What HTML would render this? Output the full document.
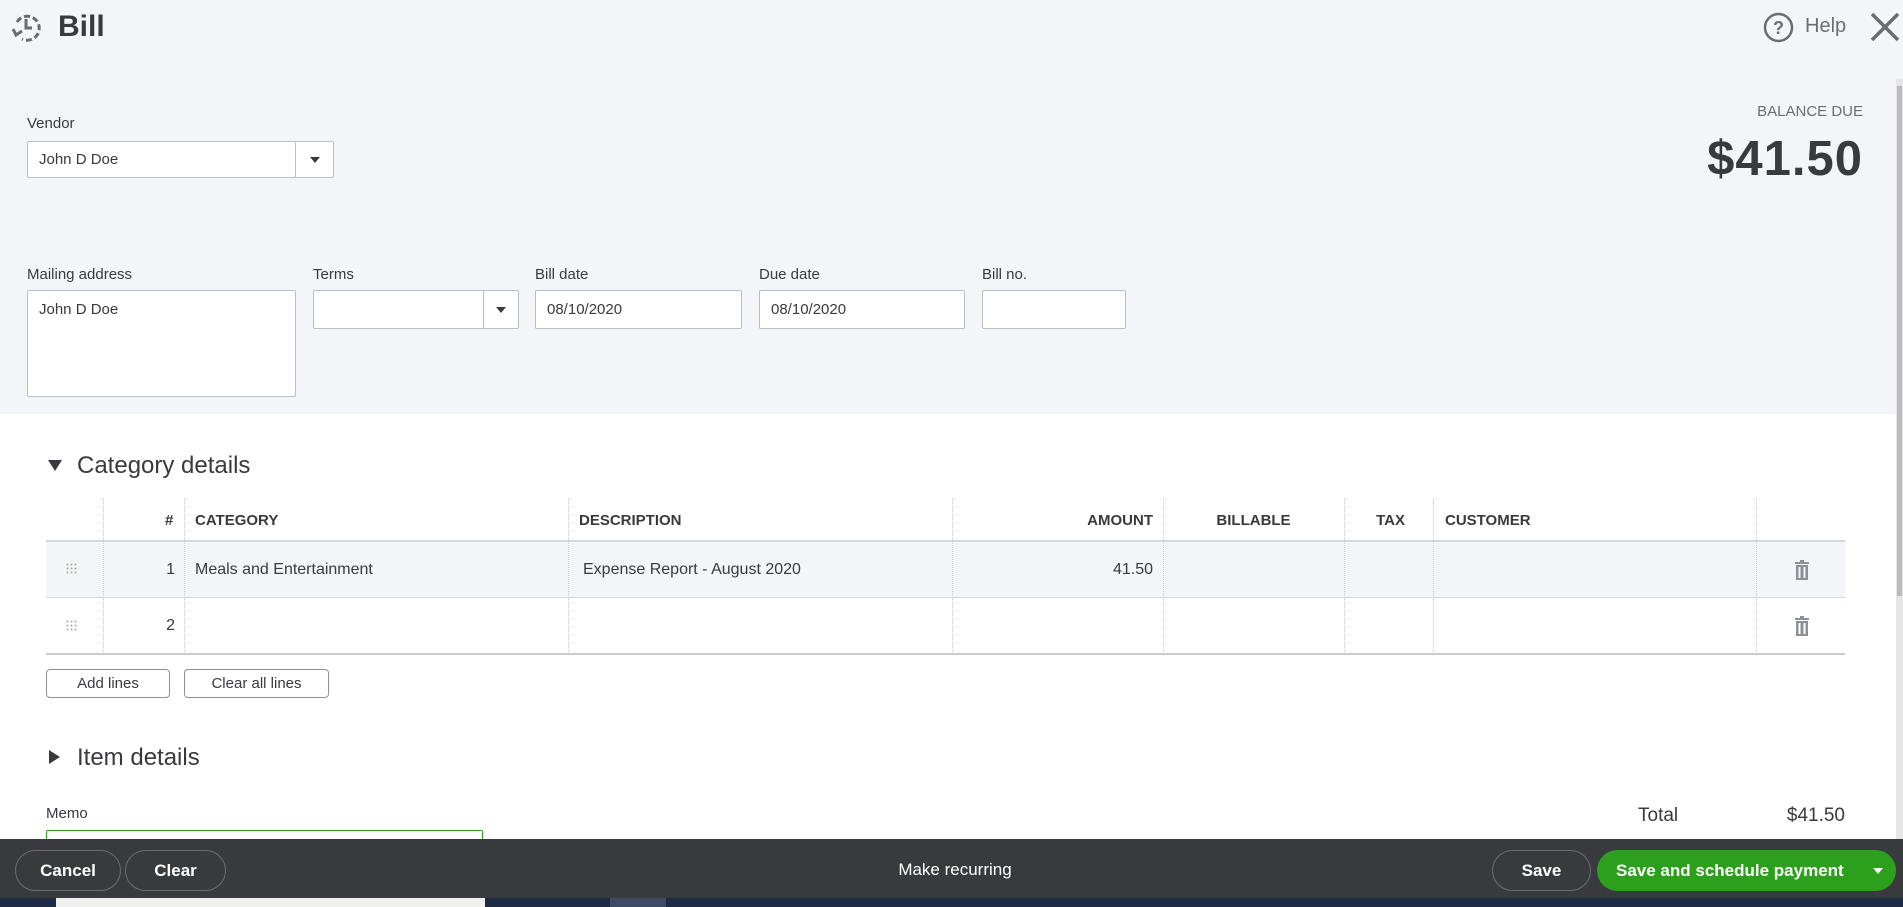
<!DOCTYPE html>
<html><head><meta charset="utf-8"><style>
*{box-sizing:border-box;margin:0;padding:0}
body{width:1903px;height:907px;overflow:hidden;position:relative;background:#fff;font-family:"Liberation Sans",sans-serif;color:#393a3d}
.a{position:absolute}
.hdr{left:0;top:0;width:1903px;height:414px;background:#f4f5f8}
.lbl{font-size:15px;color:#393a3d}
.box{background:#fff;border:1px solid #babec5;border-radius:2px;font-size:15px;color:#393a3d;padding:0 11px;display:flex;align-items:center}
.dd{border-left:1px solid #babec5}
.tri{width:0;height:0;border-left:5px solid transparent;border-right:5px solid transparent;border-top:6px solid #393a3d}
.th{font-size:15px;font-weight:bold;color:#393a3d}
.vl{width:0;border-left:1px dotted #c8c8c8}
.btn{border:1px solid #8d9096;border-radius:4px;background:#fff;font-size:15px;display:flex;align-items:center;justify-content:center}
.fb{border:1px solid #6b6c72;border-radius:22px;color:#fff;font-weight:bold;font-size:17px;display:flex;align-items:center;justify-content:center}
</style></head><body>
<div class="a hdr"></div>
<svg class="a" style="left:10px;top:10px" width="34" height="34" viewBox="0 0 34 34" fill="none" stroke="#6b6c72" stroke-width="3"><path d="M7 12 A12 12 0 1 1 12 29" stroke-dasharray="6 3"/><path d="M3 19 l3 6 l6 -4"/><path d="M16 9 v9 h6"/></svg>
<div class="a" style="left:58px;top:10px;font-size:30px;font-weight:bold;color:#393a3d">Bill</div>
<svg class="a" style="left:1763px;top:12px" width="31" height="31" viewBox="0 0 31 31"><circle cx="15.5" cy="15.5" r="13.5" fill="none" stroke="#6b6c72" stroke-width="2.5"/><text x="15.5" y="22" text-anchor="middle" font-family="Liberation Sans" font-weight="bold" font-size="18" fill="#6b6c72">?</text></svg>
<div class="a" style="left:1805px;top:15px;font-size:20px;color:#6b6c72">Help</div>
<svg class="a" style="left:1869px;top:11px" width="32" height="32" viewBox="0 0 32 32" stroke="#6b6c72" stroke-width="3.5"><path d="M3 3L29 29M29 3L3 29"/></svg>
<div class="a" style="left:1896px;top:79px;width:7px;height:760px;background:#e5e5e5"></div>
<div class="a" style="left:1897px;top:86px;width:5px;height:510px;background:#bbb"></div>

<div class="a lbl" style="left:27px;top:115px">Vendor</div>
<div class="a box" style="left:27px;top:141px;width:307px;height:37px">John D Doe</div>
<div class="a dd" style="left:295px;top:142px;width:38px;height:35px;display:flex;align-items:center;justify-content:center"><div class="tri"></div></div>
<div class="a" style="right:40px;top:103px;font-size:15px;color:#6b6c72">BALANCE DUE</div>
<div class="a" style="right:40px;top:131px;font-size:49px;font-weight:bold;color:#393a3d;letter-spacing:1px">$41.50</div>

<div class="a lbl" style="left:27px;top:266px">Mailing address</div>
<div class="a box" style="left:27px;top:290px;width:269px;height:107px;align-items:flex-start;padding-top:10px">John D Doe</div>
<div class="a lbl" style="left:313px;top:266px">Terms</div>
<div class="a box" style="left:313px;top:290px;width:206px;height:39px"></div>
<div class="a dd" style="left:483px;top:291px;width:35px;height:37px;display:flex;align-items:center;justify-content:center"><div class="tri"></div></div>
<div class="a lbl" style="left:535px;top:266px">Bill date</div>
<div class="a box" style="left:535px;top:290px;width:207px;height:39px">08/10/2020</div>
<div class="a lbl" style="left:759px;top:266px">Due date</div>
<div class="a box" style="left:759px;top:290px;width:206px;height:39px">08/10/2020</div>
<div class="a lbl" style="left:982px;top:266px">Bill no.</div>
<div class="a box" style="left:982px;top:290px;width:144px;height:39px"></div>

<div class="a" style="left:48px;top:460px;width:0;height:0;border-left:7px solid transparent;border-right:7px solid transparent;border-top:11px solid #393a3d"></div>
<div class="a" style="left:77px;top:452px;font-size:24px;color:#393a3d">Category details</div>

<div class="a" style="left:46px;top:541px;width:1799px;height:56px;background:#f4f5f8"></div>
<div class="a" style="left:46px;top:540px;width:1799px;height:2px;background:#d4d7dc"></div>
<div class="a" style="left:46px;top:597px;width:1799px;height:1px;background:#d4d7dc"></div>
<div class="a" style="left:46px;top:653px;width:1799px;height:2px;background:#c8cbd0"></div>
<div class="a vl" style="left:103px;top:499px;height:155px"></div>
<div class="a vl" style="left:184px;top:499px;height:155px"></div>
<div class="a vl" style="left:568px;top:499px;height:155px"></div>
<div class="a vl" style="left:952px;top:499px;height:155px"></div>
<div class="a vl" style="left:1163px;top:499px;height:155px"></div>
<div class="a vl" style="left:1344px;top:499px;height:155px"></div>
<div class="a vl" style="left:1433px;top:499px;height:155px"></div>
<div class="a vl" style="left:1756px;top:499px;height:155px"></div>
<div class="a th" style="left:165px;top:512px">#</div>
<div class="a th" style="left:195px;top:512px">CATEGORY</div>
<div class="a th" style="left:579px;top:512px">DESCRIPTION</div>
<div class="a th" style="right:750px;top:512px">AMOUNT</div>
<div class="a th" style="left:1163px;width:181px;top:512px;text-align:center">BILLABLE</div>
<div class="a th" style="right:498px;top:512px">TAX</div>
<div class="a th" style="left:1445px;top:512px">CUSTOMER</div>
<svg class="a" style="left:66px;top:563px" width="12" height="12" viewBox="0 0 12 12" fill="#aaa"><circle cx="1.5" cy="1.5" r="1"/><circle cx="5.5" cy="1.5" r="1"/><circle cx="9.5" cy="1.5" r="1"/><circle cx="1.5" cy="5.5" r="1"/><circle cx="5.5" cy="5.5" r="1"/><circle cx="9.5" cy="5.5" r="1"/><circle cx="1.5" cy="9.5" r="1"/><circle cx="5.5" cy="9.5" r="1"/><circle cx="9.5" cy="9.5" r="1"/></svg>
<svg class="a" style="left:66px;top:620px" width="12" height="12" viewBox="0 0 12 12" fill="#aaa"><circle cx="1.5" cy="1.5" r="1"/><circle cx="5.5" cy="1.5" r="1"/><circle cx="9.5" cy="1.5" r="1"/><circle cx="1.5" cy="5.5" r="1"/><circle cx="5.5" cy="5.5" r="1"/><circle cx="9.5" cy="5.5" r="1"/><circle cx="1.5" cy="9.5" r="1"/><circle cx="5.5" cy="9.5" r="1"/><circle cx="9.5" cy="9.5" r="1"/></svg>
<div class="a" style="right:1728px;top:561px;font-size:16px">1</div>
<div class="a" style="right:1728px;top:617px;font-size:16px">2</div>
<div class="a" style="left:195px;top:561px;font-size:16px">Meals and Entertainment</div>
<div class="a" style="left:583px;top:561px;font-size:16px">Expense Report - August 2020</div>
<div class="a" style="right:750px;top:561px;font-size:16px">41.50</div>
<svg class="a" style="left:1794px;top:560px" width="16" height="20" viewBox="0 0 16 20" fill="#8d9096"><rect x="1" y="2" width="14" height="2"/><rect x="6" y="0" width="4" height="2"/><path d="M2 5h12v15H2z M4.5 7v11h2V7z M9.5 7v11h2V7z" fill-rule="evenodd"/></svg>
<svg class="a" style="left:1794px;top:616px" width="16" height="20" viewBox="0 0 16 20" fill="#8d9096"><rect x="1" y="2" width="14" height="2"/><rect x="6" y="0" width="4" height="2"/><path d="M2 5h12v15H2z M4.5 7v11h2V7z M9.5 7v11h2V7z" fill-rule="evenodd"/></svg>

<div class="a btn" style="left:46px;top:669px;width:124px;height:29px">Add lines</div>
<div class="a btn" style="left:184px;top:669px;width:145px;height:29px">Clear all lines</div>

<div class="a" style="left:49px;top:750px;width:0;height:0;border-top:7px solid transparent;border-bottom:7px solid transparent;border-left:11px solid #393a3d"></div>
<div class="a" style="left:77px;top:744px;font-size:24px">Item details</div>
<div class="a lbl" style="left:46px;top:805px">Memo</div>
<div class="a" style="left:46px;top:830px;width:437px;height:20px;border:1px solid #2ca01c;border-radius:2px"></div>
<div class="a" style="left:1638px;top:805px;font-size:19px">Total</div>
<div class="a" style="right:58px;top:805px;font-size:19px">$41.50</div>

<div class="a" style="left:0;top:898px;width:1903px;height:9px;background:#1f2b45"></div>
<div class="a" style="left:56px;top:898px;width:429px;height:9px;background:#f0f0f0"></div>
<div class="a" style="left:610px;top:898px;width:56px;height:9px;background:#3d4a63"></div>
<div class="a" style="left:0;top:839px;width:1903px;height:59px;background:#393a3d"></div>
<div class="a fb" style="left:15px;top:850px;width:106px;height:41px">Cancel</div>
<div class="a fb" style="left:125px;top:850px;width:101px;height:41px">Clear</div>
<div class="a" style="left:855px;width:200px;top:860px;text-align:center;color:#fff;font-size:17px">Make recurring</div>
<div class="a fb" style="left:1492px;top:850px;width:99px;height:41px">Save</div>
<div class="a" style="left:1597px;top:850px;width:299px;height:41px;background:#2ca01c;border-radius:22px;color:#fff;font-weight:bold;font-size:17px;display:flex;align-items:center;padding-left:19px">Save and schedule payment</div>
<div class="a tri" style="left:1873px;top:868px;border-top-color:#fff"></div>
</body></html>
